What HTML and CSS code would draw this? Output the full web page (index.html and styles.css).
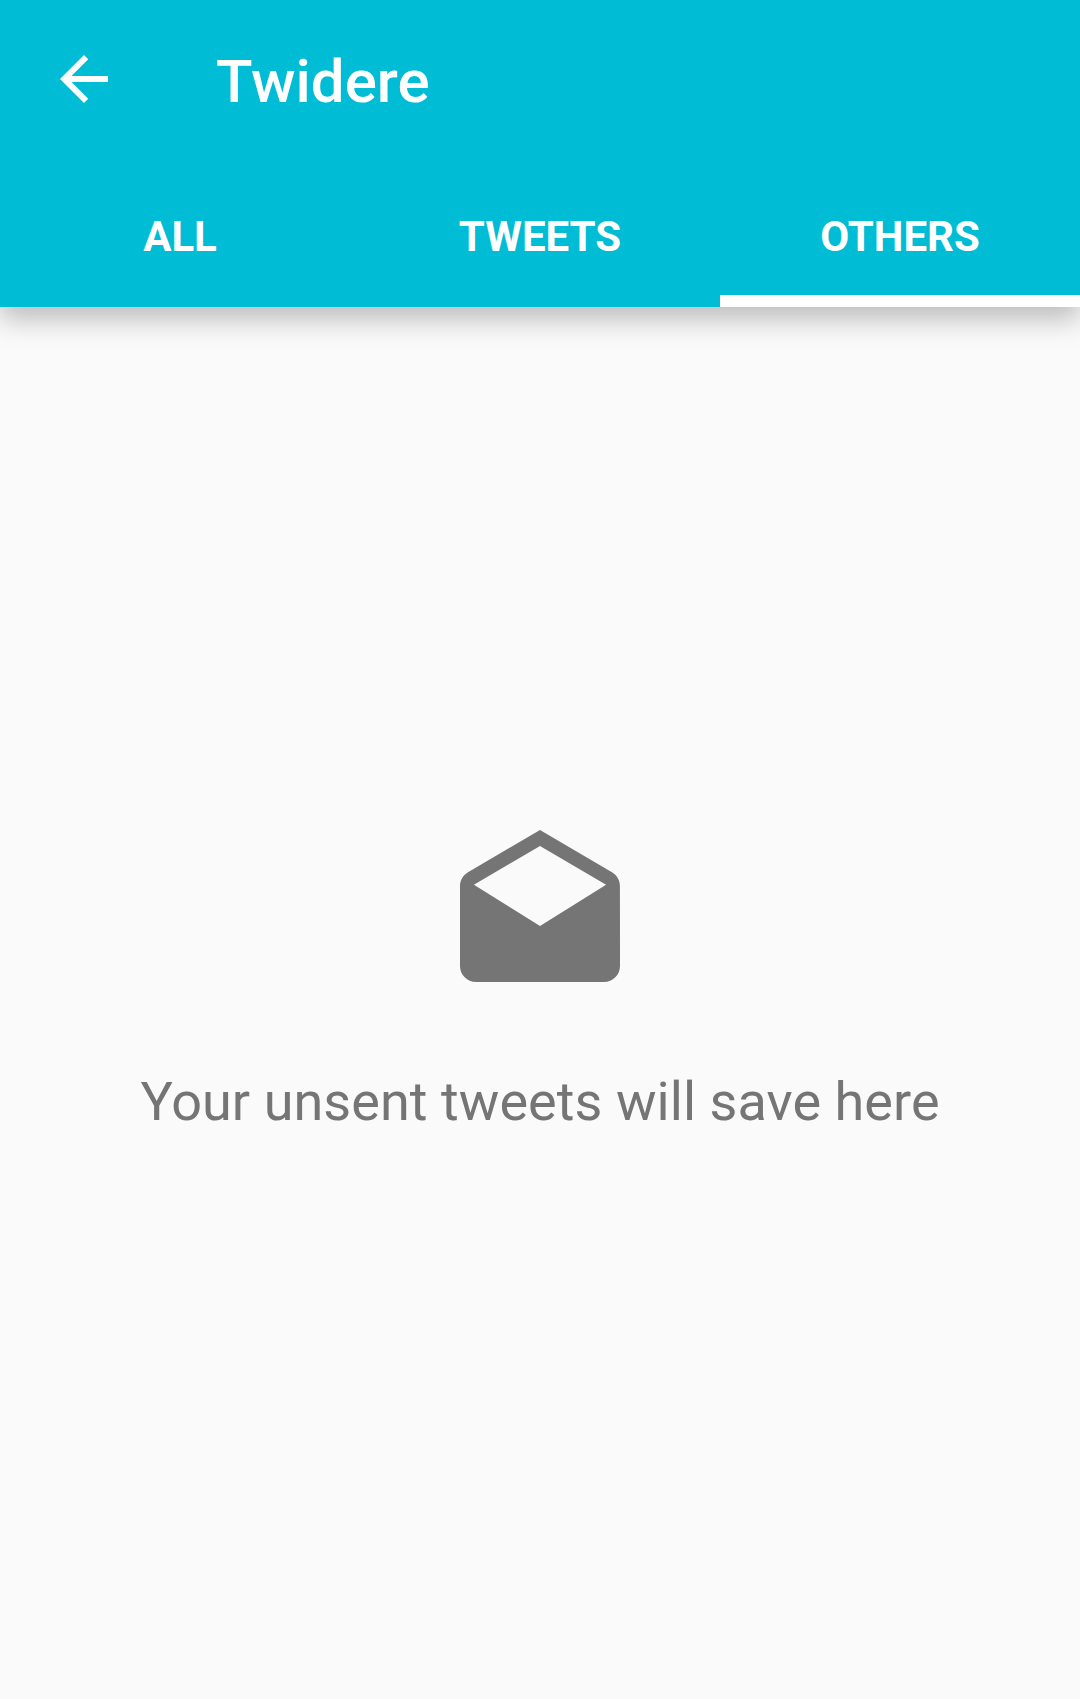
FILE: index.html
```html
<!DOCTYPE html>
<html lang="en">
<head>
<meta charset="utf-8">
<title>Twidere</title>
<link rel="stylesheet" href="styles.css">
</head>
<body>
<div class="screen">
  <header class="app-bar">
    <div class="toolbar">
      <svg class="back" viewBox="0 0 24 24" aria-label="Back"><path d="M20 11H7.83l5.59-5.59L12 4l-8 8 8 8 1.41-1.41L7.83 13H20v-2z"/></svg>
      <h1 class="title">Twidere</h1>
    </div>
    <nav class="tabs">
      <a class="tab">All</a>
      <a class="tab">Tweets</a>
      <a class="tab tab-active">Others</a>
    </nav>
  </header>
  <main class="empty">
    <svg class="drafts" viewBox="0 0 24 24"><path d="M21.99 8c0-.72-.37-1.35-.94-1.7L12 1 2.95 6.3C2.38 6.65 2 7.28 2 8v10c0 1.100.9 2 2 2h16c1.100 0 2-.9 2-2l-.01-10zM12 13L3.740 7.840 12 3l8.260 4.840L12 13z"/></svg>
    <p class="message">Your unsent tweets will save here</p>
  </main>
</div>
</body>
</html>
```
FILE: styles.css
```css
* { box-sizing: border-box; }
body { margin: 0; font-family: Roboto, sans-serif; background: #fafafa; }
.screen { height: 1699px; display: flex; flex-direction: column; overflow: hidden; }
.app-bar { height: 307px; flex: none; background: #00bcd4; color: #fff; box-shadow: 0 12px 26px rgba(0, 0, 0, .25); }
.toolbar { height: 163px; padding: 0 48px 5px; display: flex; align-items: center; }
.back { width: 72px; height: 72px; fill: #fff; flex: none; }
.title { margin: 6px 0 0 96px; font-size: 60px; line-height: 70px; font-weight: 500; }
.tabs { height: 144px; display: flex; }
.tab { flex: 1; display: flex; align-items: center; justify-content: center; padding-top: 14px; font-size: 42px; font-weight: 700; text-transform: uppercase; border-bottom: 12px solid transparent; }
.tab-active { border-bottom-color: #fff; }
.empty { flex: 1; display: flex; flex-direction: column; align-items: center; padding-top: 515px; }
.drafts { width: 192px; height: 192px; fill: #757575; }
.message { margin: 56px 0 0; font-size: 54px; line-height: 64px; letter-spacing: .06px; color: #757575; white-space: nowrap; }
```
